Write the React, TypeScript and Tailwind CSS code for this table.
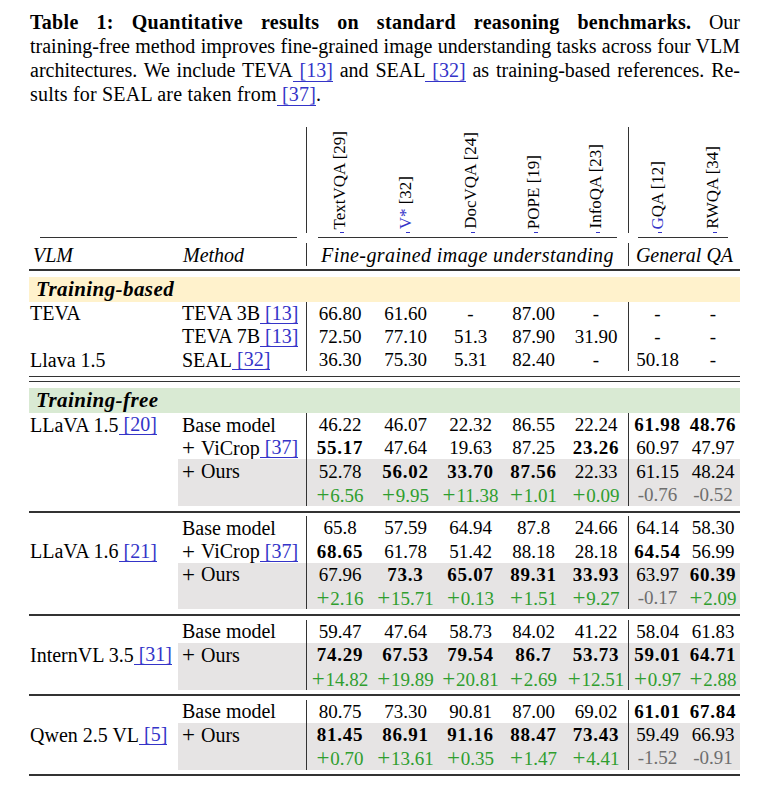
import React from "react";

const GRID = "grid grid-cols-[149px_128px_67px_65px_65px_61px_64px_58px_54px]";

function Cite({ n }: { n: string }) {
  return (
    <span className="text-[#3434c8] border-b border-[#3434c8]">
      {"\u00a0"}[{n}]
    </span>
  );
}

function Plus() {
  return <span className="text-[23px] leading-none pr-[1px]">+</span>;
}

function Num({ s }: { s: string }) {
  let bold = false;
  let t = s;
  if (t.startsWith("!")) {
    bold = true;
    t = t.slice(1);
  }
  const plus = t.startsWith("+");
  const neg = t.startsWith("-") && t.length > 1;
  const color = plus ? "text-[#2f9e2f]" : neg ? "text-[#6e6e6e]" : "text-black";
  return (
    <span className={`${color} ${bold ? "font-bold tracking-[0.04em]" : ""} text-[19px] leading-none whitespace-nowrap`}>
      {plus ? (
        <>
          <Plus />
          {t.slice(1)}
        </>
      ) : (
        t
      )}
    </span>
  );
}

type RowProps = {
  vlm?: React.ReactNode;
  method?: React.ReactNode;
  vals: string[];
  gray?: boolean;
};

function Row({ vlm, method, vals, gray }: RowProps) {
  const bg = gray ? "bg-[#e6e4e4]" : "";
  return (
    <div className={`${GRID} h-[23.3px]`}>
      <div className="flex items-center pl-[1px] text-[20px] leading-none whitespace-nowrap text-black">{vlm}</div>
      <div className={`flex items-center pl-[4px] text-[20px] leading-none whitespace-nowrap text-black ${bg}`}>{method}</div>
      {vals.map((v, i) => (
        <div
          key={i}
          className={`flex items-center justify-center ${bg} ${i === 0 || i === 5 ? "border-l border-[#333]" : ""}`}
        >
          <Num s={v} />
        </div>
      ))}
    </div>
  );
}

function Band({ label, color }: { label: string; color: string }) {
  return (
    <div className={`flex items-center pl-[7px] h-[24.5px] ${color}`}>
      <span className="text-[21px] font-bold italic leading-none tracking-[0.02em] text-black">{label}</span>
    </div>
  );
}

function Sep() {
  return <div className="h-[2px] bg-[#333]" />;
}

const heads: { t: React.ReactNode; line: boolean }[] = [
  { t: <>TextVQA [29]</>, line: true },
  {
    t: (
      <>
        <span className="text-[#3434c8]">V*</span> [32]
      </>
    ),
    line: false,
  },
  { t: <>DocVQA [24]</>, line: false },
  { t: <>POPE [19]</>, line: false },
  { t: <>InfoQA [23]</>, line: false },
  {
    t: (
      <>
        <span className="text-[#3434c8]">G</span>QA [12]
      </>
    ),
    line: true,
  },
  { t: <>RWQA [34]</>, line: false },
];

const plus = (s: string) => (
  <>
    <Plus />
    {"\u00a0"}
    {s}
  </>
);

export default function App() {
  return (
    <div className="w-[766px] min-h-[791px] bg-white font-['Liberation_Serif','Times_New_Roman',serif] text-black">
      {/* Caption */}
      <div className="pl-[30px] pr-[26px] pt-[10px] text-[20px] leading-[24px]">
        <div className="text-justify [text-align-last:justify]">
          <b className="tracking-[0.015em]">Table 1: Quantitative results on standard reasoning benchmarks.</b> Our
        </div>
        <div className="text-justify [text-align-last:justify]">
          training-free method improves fine-grained image understanding tasks across four VLM
        </div>
        <div className="text-justify [text-align-last:justify]">
          architectures. We include TEVA<Cite n="13" /> and SEAL<Cite n="32" /> as training-based references. Re-
        </div>
        <div className="tracking-[0.01em]">
          sults for SEAL are taken from<Cite n="37" />.
        </div>
      </div>

      {/* Table */}
      <div className="ml-[29px] w-[711px] mt-[21px]">
        {/* Header row A: rotated headers */}
        <div className={`${GRID} h-[106px]`}>
          <div />
          <div />
          {heads.map((h, i) => (
            <div
              key={i}
              className={`flex flex-col items-center justify-end ${h.line ? "border-l border-[#333]" : ""}`}
            >
              <span className="[writing-mode:vertical-rl] rotate-180 text-[17px] leading-[14px] whitespace-nowrap text-black">
                {h.t}
              </span>
              <div className="w-[4px] h-[1px] bg-[#3434c8] mt-[3px] ml-[4px]" />
            </div>
          ))}
        </div>

        {/* cmidrules */}
        <div className={`${GRID} h-[10px]`}>
          <div className="col-span-2 pl-[11px] pr-[9px] pt-[4px]">
            <div className="h-[1px] bg-[#333]" />
          </div>
          <div className="col-span-5 pl-[12px] pr-[11px] pt-[4px]">
            <div className="h-[1px] bg-[#333]" />
          </div>
          <div className="col-span-2 pl-[10px] pr-[12px] pt-[4px]">
            <div className="h-[1px] bg-[#333]" />
          </div>
        </div>

        {/* Header row B */}
        <div className={`${GRID} h-[23px] italic text-[20px] leading-none`}>
          <div className="flex items-center pl-[4px]">VLM</div>
          <div className="flex items-center pl-[5px]">Method</div>
          <div className="col-span-5 flex items-center justify-center border-l border-[#333] tracking-[0.02em]">
            Fine-grained image understanding
          </div>
          <div className="col-span-2 flex items-center justify-center border-l border-[#333]">General QA</div>
        </div>

        <div className="h-[3px]" />
        <div className="h-[1.5px] bg-[#333]" />
        <div className="h-[6.5px]" />

        {/* Training-based */}
        <Band label="Training-based" color="bg-[#fff2cc]" />
        <Row
          vlm="TEVA"
          method={<>TEVA 3B<Cite n="13" /></>}
          vals={["66.80", "61.60", "-", "87.00", "-", "-", "-"]}
        />
        <Row
          method={<>TEVA 7B<Cite n="13" /></>}
          vals={["72.50", "77.10", "51.3", "87.90", "31.90", "-", "-"]}
        />
        <Row
          vlm="Llava 1.5"
          method={<>SEAL<Cite n="32" /></>}
          vals={["36.30", "75.30", "5.31", "82.40", "-", "50.18", "-"]}
        />

        <div className="h-[5px]" />
        <div className="h-[1px] bg-[#333]" />
        <div className="h-[4px]" />
        <div className="h-[1px] bg-[#333]" />
        <div className="h-[6px]" />

        {/* Training-free */}
        <Band label="Training-free" color="bg-[#d9ead3]" />
        <Row
          vlm={<>LLaVA 1.5<Cite n="20" /></>}
          method="Base model"
          vals={["46.22", "46.07", "22.32", "86.55", "22.24", "!61.98", "!48.76"]}
        />
        <Row
          method={<>{plus("ViCrop")}<Cite n="37" /></>}
          vals={["!55.17", "47.64", "19.63", "87.25", "!23.26", "60.97", "47.97"]}
        />
        <Row
          method={plus("Ours")}
          vals={["52.78", "!56.02", "!33.70", "!87.56", "22.33", "61.15", "48.24"]}
          gray
        />
        <Row vals={["+6.56", "+9.95", "+11.38", "+1.01", "+0.09", "-0.76", "-0.52"]} gray />

        <div className="h-[4.5px]" />
        <Sep />
        <div className="h-[3.5px]" />

        <Row
          method="Base model"
          vals={["65.8", "57.59", "64.94", "87.8", "24.66", "64.14", "58.30"]}
        />
        <Row
          vlm={<>LLaVA 1.6<Cite n="21" /></>}
          method={<>{plus("ViCrop")}<Cite n="37" /></>}
          vals={["!68.65", "61.78", "51.42", "88.18", "28.18", "!64.54", "56.99"]}
        />
        <Row
          method={plus("Ours")}
          vals={["67.96", "!73.3", "!65.07", "!89.31", "!33.93", "63.97", "!60.39"]}
          gray
        />
        <Row vals={["+2.16", "+15.71", "+0.13", "+1.51", "+9.27", "-0.17", "+2.09"]} gray />

        <div className="h-[4.5px]" />
        <Sep />
        <div className="h-[4px]" />

        <Row
          method="Base model"
          vals={["59.47", "47.64", "58.73", "84.02", "41.22", "58.04", "61.83"]}
        />
        <Row
          vlm={<>InternVL 3.5<Cite n="31" /></>}
          method={plus("Ours")}
          vals={["!74.29", "!67.53", "!79.54", "!86.7", "!53.73", "!59.01", "!64.71"]}
          gray
        />
        <Row vals={["+14.82", "+19.89", "+20.81", "+2.69", "+12.51", "+0.97", "+2.88"]} gray />

        <div className="h-[4.5px]" />
        <Sep />
        <div className="h-[3.5px]" />

        <Row
          method="Base model"
          vals={["80.75", "73.30", "90.81", "87.00", "69.02", "!61.01", "!67.84"]}
        />
        <Row
          vlm={<>Qwen 2.5 VL<Cite n="5" /></>}
          method={plus("Ours")}
          vals={["!81.45", "!86.91", "!91.16", "!88.47", "!73.43", "59.49", "66.93"]}
          gray
        />
        <Row vals={["+0.70", "+13.61", "+0.35", "+1.47", "+4.41", "-1.52", "-0.91"]} gray />

        <div className="h-[4px]" />
        <Sep />
      </div>
    </div>
  );
}
